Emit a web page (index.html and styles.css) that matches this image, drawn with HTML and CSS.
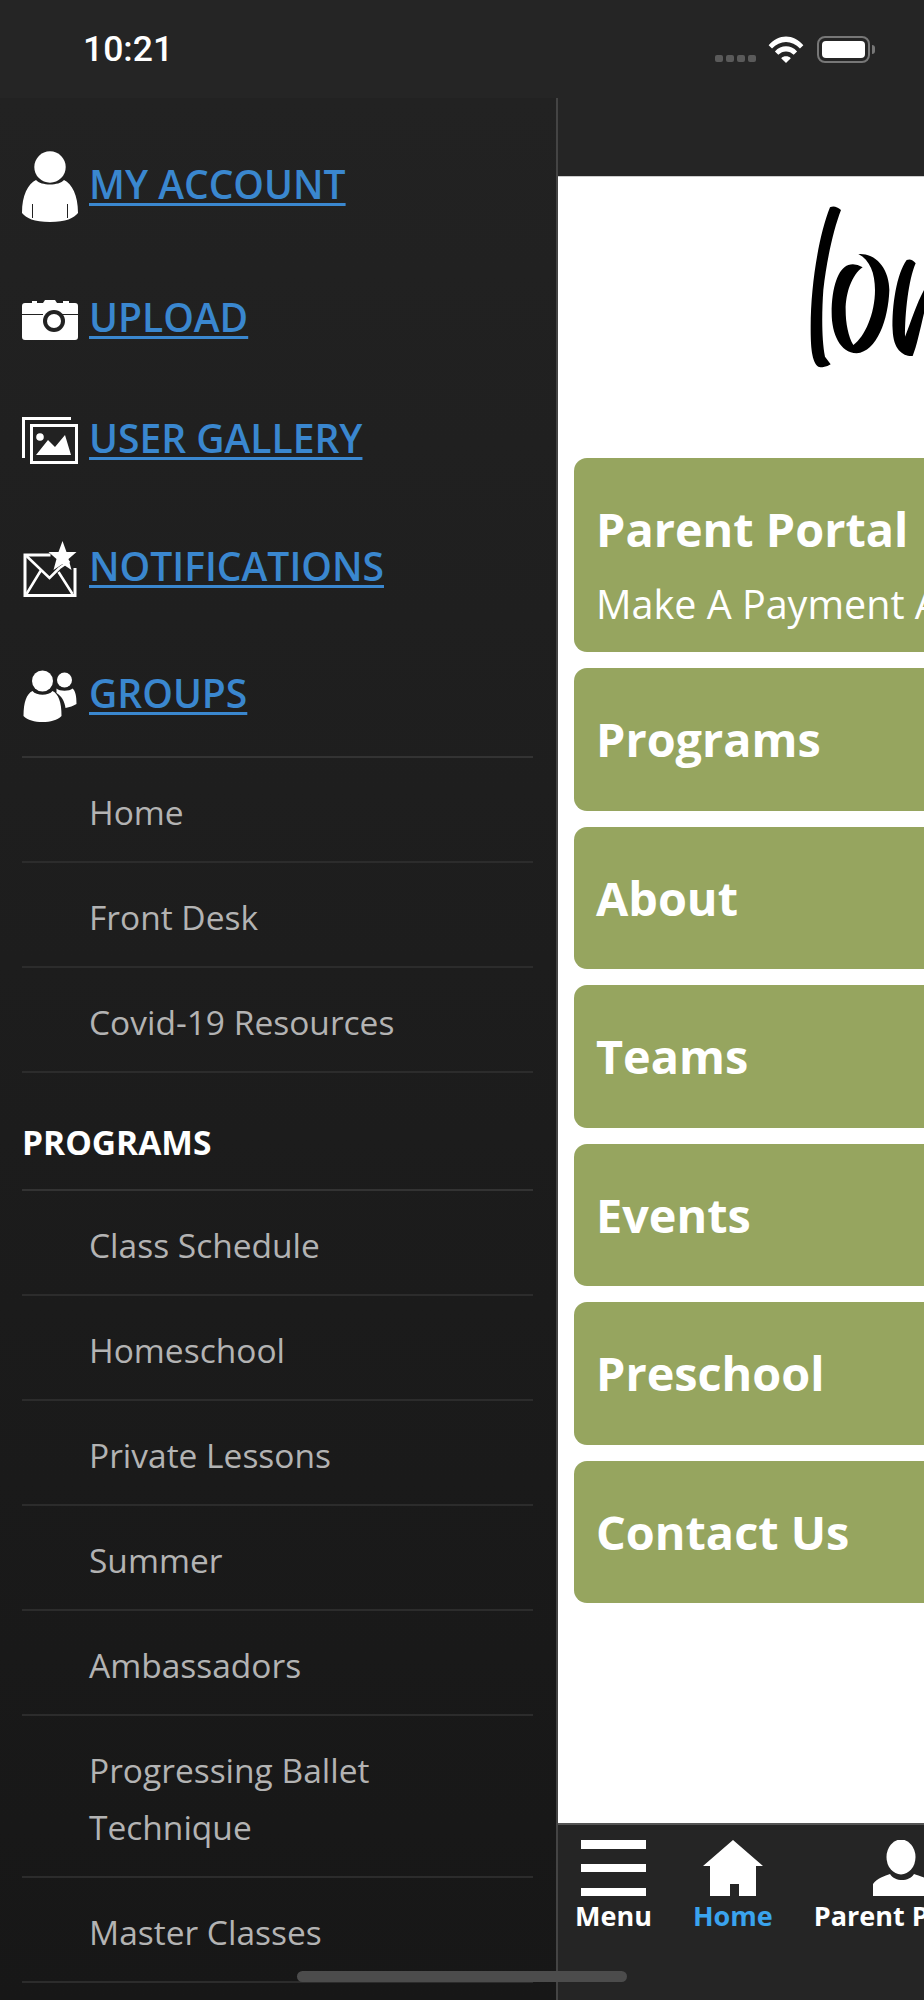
FILE: index.html
```html
<!DOCTYPE html>
<html lang="en">
<head>
<meta charset="utf-8">
<title>Menu</title>
<link rel="stylesheet" href="styles.css">
</head>
<body>
<div class="phone">
  <header class="status">
    <span class="time">10:21</span>
    <div class="status-icons">
      <div class="signal"><i></i><i></i><i></i><i></i></div>
      <svg class="wifi" viewBox="0 0 36 28"><path d="M0 9.500C10-2.500 26-2.500 36 9.500L32.500 13C24.500 4 11.500 4 3.500 13Z" fill="#fff"/><path d="M6.500 16C13 9 23 9 29.500 16L26 19.500C21.500 14.800 14.500 14.800 10 19.500Z" fill="#fff"/><path d="M13 23C15.500 20.300 20.500 20.300 23 23L18 28Z" fill="#fff"/></svg>
      <div class="battery"><div class="battery-fill"></div></div>
      <div class="battery-nub"></div>
    </div>
  </header>
  <div class="body">
    <nav class="drawer">
      <a class="acct" href="#">
        <svg class="ic" width="56" height="72" viewBox="0 0 56 72"><circle cx="28" cy="16" r="15.700" fill="#fff"/><path d="M14 29C19 35 37 35 42 29C50 33 56 44 56 62C52 67 44 71 28 71C12 71 4 67 0 62C0 44 6 33 14 29Z" fill="#fff"/><path d="M10.500 53V67M45.500 53V67" stroke="#222" stroke-width="1"/></svg>
        <span>MY ACCOUNT</span>
      </a>
      <a class="acct acct-upload" href="#">
        <svg class="ic" width="56" height="40" viewBox="0 0 56 40"><path d="M3 3H10V1H15V3H21L23 0H33L35 3H41V1H47V3H53Q56 3 56 6V37Q56 40 53 40H3Q0 40 0 37V6Q0 3 3 3Z" fill="#fff"/><path d="M0 14.500H21M35 14.500H56" stroke="#222" stroke-width="1"/><circle cx="32" cy="21" r="11" fill="#222"/><circle cx="32" cy="21" r="7" fill="#fff"/></svg>
        <span>UPLOAD</span>
      </a>
      <a class="acct acct-gallery" href="#">
        <svg class="ic" width="56" height="48" viewBox="0 0 56 48"><path d="M1.500 41V1.500H49" fill="none" stroke="#fff" stroke-width="3"/><path d="M8 47V7H56V47Z" fill="#fff"/><path d="M11 10H53V44H11Z" fill="#222"/><circle cx="18" cy="20" r="3.800" fill="#fff"/><path d="M14 38L26 23L33 30L43 18L49 38Z" fill="#fff"/></svg>
        <span>USER GALLERY</span>
      </a>
      <a class="acct" href="#">
        <svg class="ic" width="53" height="56" viewBox="0 0 53 56"><path d="M39 0L43 11H53L45 18L48 29L39 23L30 29L33 18L25 11H35Z" fill="#fff"/><path d="M27 14H1.500V54.500H51.500V27" fill="none" stroke="#fff" stroke-width="3"/><path d="M3 15L26 37L36 27M3 53L17 30M49 53L35 31M36 27L46 20" fill="none" stroke="#fff" stroke-width="2.500"/></svg>
        <span>NOTIFICATIONS</span>
      </a>
      <a class="acct acct-groups" href="#">
        <svg class="ic" width="53" height="52" viewBox="0 0 53 52"><circle cx="19" cy="11" r="10.500" fill="#fff"/><path d="M9 21C13 26 25 26 29 21C35 24 38 32 38 46C34 50 27 52 19 52C11 52 4 50 0 46C0 32 3 24 9 21Z" fill="#fff"/><circle cx="41" cy="10" r="7.500" fill="#fff"/><path d="M33 18.500C36 21.500 46 21.500 49 18.500C52 21 53 26 53 34C50 36 46 37 42 38C41 31 38 26 33 23Z" fill="#fff"/></svg>
        <span>GROUPS</span>
      </a>
      <ul class="menu">
        <li>Home</li>
        <li>Front Desk</li>
        <li>Covid-19 Resources</li>
        <li class="section">PROGRAMS</li>
        <li>Class Schedule</li>
        <li>Homeschool</li>
        <li>Private Lessons</li>
        <li>Summer</li>
        <li>Ambassadors</li>
        <li>Progressing Ballet Technique</li>
        <li>Master Classes</li>
      </ul>
    </nav>
    <main class="app">
      <div class="app-head"></div>
      <div class="content">
        <svg class="logo" width="144" height="210" viewBox="0 0 432 630"><path d="M150 82Q165 74 183 90C160 150 140 240 130 330C125 400 125 480 135 530L152 553Q135 566 115 560C95 545 92 500 92 440C92 320 115 170 150 82Z"/><path d="M248 262Q225 248 205 255C175 265 155 320 155 400C155 460 180 520 230 520C290 515 325 420 328 330C328 270 290 218 235 222C270 240 285 280 285 330C285 400 255 470 220 495C205 470 197 430 197 390C197 340 215 285 248 262Z"/><path d="M380 240Q395 234 407 250C385 300 375 400 375 470C395 420 410 370 432 330V400C420 450 410 500 398 528C370 530 340 510 338 450C335 380 350 280 380 240Z"/></svg>
        <div class="buttons">
          <a class="btn btn-tall" href="#"><b>Parent Portal</b><span>Make A Payment And More</span></a>
          <a class="btn" href="#"><b>Programs</b></a>
          <a class="btn" href="#"><b>About</b></a>
          <a class="btn" href="#"><b>Teams</b></a>
          <a class="btn" href="#"><b>Events</b></a>
          <a class="btn" href="#"><b>Preschool</b></a>
          <a class="btn" href="#"><b>Contact Us</b></a>
        </div>
      </div>
      <div class="tabs">
        <a class="tab" href="#">
          <svg width="65" height="56" viewBox="0 0 65 56"><path d="M0 0H65V9H0ZM0 24H65V32H0ZM0 48H65V56H0Z" fill="#fff"/></svg>
          <span>Menu</span>
        </a>
        <a class="tab tab-on" href="#">
          <svg width="60" height="56" viewBox="0 0 60 56"><path d="M30 0L60 26H53V56H36V44H27V56H7V26H0Z" fill="#fff"/></svg>
          <span>Home</span>
        </a>
        <a class="tab" href="#">
          <svg width="62" height="56" viewBox="0 0 62 56"><ellipse cx="28" cy="17" rx="14.500" ry="17.500" fill="#fff"/><path d="M0 56V44C4 38 12 36 17 34C22 42 36 42 41 34C46 36 56 38 62 44V56Z" fill="#fff"/></svg>
          <span>Parent Portal</span>
        </a>
      </div>
    </main>
  </div>
  <div class="home-bar"></div>
</div>
</body>
</html>
```
FILE: styles.css
```css
* { box-sizing: border-box; }
html, body { margin: 0; padding: 0; }
body { background: #252525; font-family: "Open Sans", sans-serif; }
a { text-decoration: none; }

.phone {
  position: relative;
  width: 924px;
  height: 2000px;
  overflow: hidden;
  display: flex;
  flex-direction: column;
  background: #252525;
}

.status {
  flex: none;
  height: 98px;
  display: flex;
  align-items: center;
  justify-content: space-between;
  padding: 0 49px 0 83px;
}
.time {
  font-family: Roboto, sans-serif;
  font-size: 35.500px;
  font-weight: 500;
  color: #fff;
}
.status-icons { display: flex; align-items: center; }
.signal { display: flex; gap: 3px; margin-top: 19px; margin-right: 12px; }
.signal i { width: 8px; height: 7px; border-radius: 2px; background: #5a5a5a; }
.wifi { width: 36px; height: 27px; margin-right: 13px; }
.battery {
  width: 53px;
  height: 27px;
  border: 2px solid #777;
  border-radius: 8px;
  padding: 3px;
}
.battery-fill { width: 100%; height: 100%; background: #fff; border-radius: 4px; }
.battery-nub { width: 3px; height: 9px; margin-left: 2px; background: #777; border-radius: 0 3px 3px 0; }

.body { flex: 1; display: flex; min-height: 0; }

.drawer {
  flex: none;
  width: 558px;
  padding: 15px 23px 0 22px;
  border-right: 2px solid #444;
  background: linear-gradient(#222222, #171717);
  overflow: hidden;
}
.acct {
  display: flex;
  align-items: center;
  padding: 38px 0;
  font-size: 39px;
  font-weight: 600;
  line-height: 40px;
  color: #3a87cf;
}
.acct span {
  margin-left: 11px;
  margin-top: -7px;
  text-decoration: underline;
  text-decoration-thickness: 2.500px;
  text-underline-offset: 4px;
}
.acct-upload { padding-top: 39px; }
.acct-gallery { padding-top: 39px; }
.acct-groups { padding-top: 35px; padding-bottom: 34px; }
.ic { flex: none; width: 56px; }

.menu { list-style: none; margin: 0; padding: 0; border-top: 2px solid #333; }
.menu li {
  border-bottom: 2px solid #2c2c2c;
  padding: 26px 0 20px 67px;
  font-size: 33.500px;
  line-height: 57px;
  color: #b3b3b3;
}
.menu .section {
  padding: 41px 0 18px 0;
  font-size: 33.500px;
  font-weight: 700;
  color: #fff;
  border-bottom-color: #333;
}

.app { flex: none; width: 924px; display: flex; flex-direction: column; background: #fff; }
.app-head { flex: none; height: 79px; background: #252525; border-bottom: 1px solid #ccc; }
.content { flex: 1; padding: 0 16px; min-height: 0; }
.logo { display: block; margin: 3px 0 0 206px; }
.buttons { display: flex; flex-direction: column; gap: 16px; margin-top: 68px; }
.btn {
  display: flex;
  flex-direction: column;
  justify-content: center;
  height: 142.500px;
  padding: 0 22px;
  border-radius: 13px;
  background: #96a55f;
  color: #fff;
  white-space: nowrap;
}
.btn-tall { height: 194px; padding-top: 20px; }
.btn b { font-size: 46.800px; font-weight: 700; line-height: 58px; }
.btn span { font-size: 39.500px; line-height: 52px; margin-top: 20px; }

.tabs {
  flex: none;
  height: 177px;
  display: flex;
  gap: 41px;
  background: #252525;
  border-top: 2px solid #555;
  padding: 15px 0 0 17px;
}
.tab {
  display: flex;
  flex-direction: column;
  align-items: center;
  color: #fff;
  font-size: 27px;
  font-weight: 700;
  line-height: 34px;
  white-space: nowrap;
}
.tab svg { flex: none; }
.tab span { margin-top: 3px; }
.tab-on span { color: #3aa3ee; }

.home-bar {
  position: absolute;
  left: 297px;
  top: 1971px;
  width: 330px;
  height: 11px;
  border-radius: 6px;
  background: #4c4c4c;
}
```
